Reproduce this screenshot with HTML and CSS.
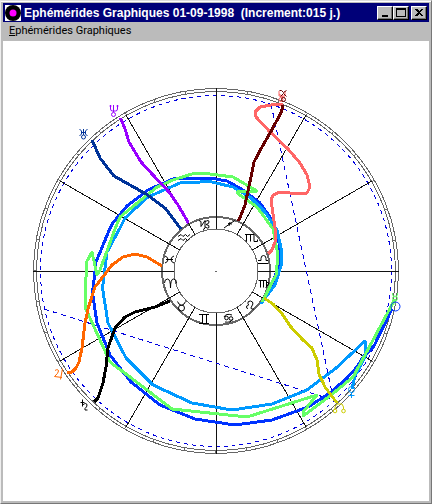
FILE: index.html
```html
<!DOCTYPE html>
<html lang="fr">
<head>
    <meta charset="UTF-8">
    <meta name="viewport" content="width=device-width, initial-scale=1.0">
    <title>Ephémérides Graphiques</title>
    <link rel="stylesheet" href="styles.css">
</head>
<body>
    <div class="window">
        <header class="title-bar">
            <svg class="app-icon" viewBox="0 0 16 16" aria-hidden="true">
                <rect width="16" height="16" fill="#fff"/>
                <circle cx="8" cy="8" r="8" fill="#000"/>
                <circle cx="8" cy="8" r="3.5" fill="#f0f"/>
            </svg>
            <h1 class="title">Ephémérides Graphiques 01-09-1998&nbsp; (Increment:015 j.)</h1>
            <div class="controls">
                <button class="control" aria-label="Minimize">
                    <svg viewBox="0 0 12 10"><path d="M3 7h6v2H3z"/></svg>
                </button>
                <button class="control" aria-label="Maximize">
                    <svg viewBox="0 0 12 10"><path d="M1 0h10v9H1zM2 2v6h8V2z" fill-rule="evenodd"/></svg>
                </button>
                <button class="control close" aria-label="Close">
                    <svg viewBox="0 0 12 10"><path d="M2 1h2l2 2 2-2h2L7 4.500 10 8H8L6 6 4 8H2l3-3.500z"/></svg>
                </button>
            </div>
        </header>
        <nav class="menu-bar">
            <button class="menu-item"><u>E</u>phémérides Graphiques</button>
        </nav>
        <main class="client">
            <svg class="chart" viewBox="3 41 426 460" role="img" aria-label="Ephémérides Graphiques">
                <!-- outer rings, tick marks every 10 degrees -->
                <g class="ring">
                    <circle cx="216" cy="271" r="182.5"/>
                    <circle cx="216" cy="271" r="179.5"/>
                    <circle class="ticks" cx="216" cy="271" r="181" pathLength="360"/>
                    <circle cx="216" cy="271" r="42"/>
                    <circle class="thick" cx="216" cy="271" r="54"/>
                    <path d="M215 271h2"/>
                </g>
                <circle class="dashed" cx="216" cy="271" r="175.5"/>

                <!-- house lines -->
                <g class="spokes">
                    <path d="M258 271H399M174 271H33M216 229V88M216 313V454"/>
                    <path d="M252.4 250L372 181M237 234.6L306 115M195 234.6L126 115M179.6 250L60 181"/>
                    <path d="M179.6 292L60 361M195 307.4L126 427M237 307.4L306 427M252.4 292L372 361"/>
                </g>

                <!-- aspect lines -->
                <path class="dashed aspects" d="M271 104L334 402M44 309L330 399"/>

                <!-- planet tracks -->
                <g class="tracks">
                    <path stroke="#0033ff" d="M392 309L374 346 363 357 357 367 347 378 330 393 308 407 272 420 235 425 195 419 160 405 131 382 110 355 97 323 92.5 293 96 262 108 233 112 224 127 206 148 190 173 179 202 178 210 178 227 181 243 190 260 203 270 217 277 231 280 248 279 265 273 282 262 303"/>
                    <path stroke="#0099ff" d="M352 389L355 376 365 357V341L335 369 307 390 272 404 232 410 192 403 153 385 126 358 108 323 102.5 288 107 252 120 228 125 218 148 197 180 183 210 181.5 233 187 250 197 265 212 277 230 281 248 281 266 275 285 265 298 261 304"/>
                    <path stroke="#66ff66" d="M395 299L365 355 353 377 330 396 303 416V412L317 395 247 417 172 409 130 377 110 362 85 307 86.5 262 92 252 97 275 100 270 115 229 120 217 157 187 173 180 195 173 210 174 233 177 257 191 239 191 237 193 257 207 273 229 278 255 276 275 262 302"/>
                    <path stroke="#cccc00" d="M264 298L273 304 283 315 290 326 303 340 312 348 317 360 319 374 325 387 337 403"/>
                    <path stroke="#ff6600" d="M67 372H72L76 368 79 362 82 348 85 323 88.5 307 95 287 112 265 123 257 135 254 147 257 162 266"/>
                    <path stroke="#000000" d="M94 402L98 398 103 383 106 367 108 348 115 328 125 317 135 312 155 307 170 301"/>
                    <path stroke="#003399" d="M92 140L100 158 114 176 146 194 165 208 181 229"/>
                    <path stroke="#9900ff" d="M120.5 118L125 129 129 142 135 152 141 162 153 175 169 192 178 205 188.5 223"/>
                    <path stroke="#ff6666" d="M283 104L271 105 260 107 255 112 256 117 270 132 288 149 300 163 307 175 310 187 307 193 300 194 280 192 273 195 271 200 275 228 276 235 275 242 272 250 268 254"/>
                    <path stroke="#660000" d="M283 105L281.5 112 270 133 262 147 254 162 251 177 245 205 238.5 221"/>
                </g>

                <!-- planet symbols -->
                <g class="symbols">
                    <g stroke="#9900ff"><path d="M110.500 105v4q0 2 2 2h3q2 0 2-2v-4M113.500 105v7M109.500 106h2M116.500 106h2"/><circle cx="113.500" cy="114.500" r="2"/></g>
                    <g stroke="#003399"><path d="M79.500 129l2 2v3l-2 2M87.500 129l-2 2v3l2 2M81.500 132.500h4M83.500 129v6"/><circle cx="83.500" cy="137" r="2"/></g>
                    <g stroke="#ff6666"><path d="M279 91v5h6v-5M279 94l6 4M282 96v4"/><circle cx="281" cy="99.500" r="2"/></g>
                    <g stroke="#660000"><path d="M279.500 90.500h2l2 2 3-2M280.500 96.500l3-3 3 3"/><circle cx="283.500" cy="99.500" r="2"/></g>
                    <g stroke="#ff6600"><path d="M55 370.500q3-2 3.500.5 0 2-4 5.500l7.500 1M62.500 368.500l-2 11"/></g>
                    <g stroke="#000000"><path d="M80.500 402.500h4M82.500 399.500v7M82.500 405q4-3 4.500 0 0 2-2 3.500v1.500h2.500"/></g>
                    <g stroke="#66ff66"><path d="M392.500 293v2l2 2h1l2-2v-2M395 300.500v4"/><circle cx="395" cy="298.500" r="2.500"/></g>
                    <g stroke="#0033ff"><circle cx="395.500" cy="306.500" r="4.500"/></g>
                    <g stroke="#0099ff"><circle cx="351.500" cy="389.500" r="3"/><path d="M351.500 392v6M348.500 395.500h6"/></g>
                    <g stroke="#cccc00"><circle cx="335" cy="411" r="1.800"/><circle cx="343.500" cy="411" r="1.800"/><path d="M335 409v-2l2-3h5l1.500 3v2"/></g>
                </g>

                <!-- zodiac signs -->
                <g class="signs">
                    <path d="M164.500 283q0-4 3-4 3 0 3 9 0-9 3-9 3 0 3 4"/>
                    <path d="M165 256q3 1 3 3.500t-3 3.500M174 256q-3 1-3 3.500t3 3.500M166 259.500h7"/>
                    <path d="M178 236.500l3-2 2 2 2.500-2 2 2 2.500-2M178 240.500l3-2 2 2 2.500-2 2 2 2.500-2"/>
                    <path d="M199 220.500l2 1v5l4-6v7q-.5 2-2 2M205 222q4-3 4 0 0 2-3 2.500 4 .5 3 3-1 1.500-4-.5"/>
                    <path d="M224 228l7-5 4-2.500M228 223.500l4 .5M229 226l1-4"/>
                    <path d="M245 234.500h9v7h3.500v-2M246.500 234.500v7M250.500 234.500v7"/>
                    <path d="M258 263.500h10M258 260.500h3v-2q0-3 2.500-3t2.500 3v2h2"/>
                    <path d="M258.500 280.500h8v7M260.500 280.500v7M263.500 280.500v7M266.500 282.500h2v2l-3 3"/>
                    <path d="M248 308.500a1.500 1.500 0 1 1-.1-3q1.500 0 0-2-.5-2.500 2.500-2.500 3 .5 2.500 3l-2 4q0 1.500 3 1"/>
                    <path d="M224 317q2-4 8-2M233 319q-2 4-8 3"/><circle cx="226.500" cy="318" r="1.800"/><circle cx="231" cy="318.500" r="1.800"/>
                    <path d="M199 314.500h10M199 323.500h10M202.500 314.500v9M206.500 314.500v9"/>
                    <path d="M177.500 301.500q1 3 4 4 3-1 4-4"/><circle cx="181.500" cy="308" r="3"/>
                </g>
            </svg>
        </main>
    </div>
</body>
</html>
```
FILE: styles.css
```css
* {
    box-sizing: border-box;
}
body {
    margin: 0;
    font-family: "Liberation Sans", Arial, sans-serif;
    background-color: #bbb;
}
.window {
    min-height: 100vh;
    display: flex;
    flex-direction: column;
    padding: 1px 2px 2px 2px;
    border: 1px solid #777;
    border-top-color: #ddd;
    border-left-color: #eee;
    background-color: #bbb;
    box-shadow: inset 0 1px #fff;
}
.title-bar {
    display: flex;
    align-items: center;
    height: 19px;
    margin-top: 1px;
    padding: 0 2px;
    background-color: #000078;
}
.app-icon {
    width: 16px;
    height: 16px;
    flex: none;
}
.title {
    flex: 1;
    margin: 0;
    padding-left: 3px;
    color: #fff;
    font-size: 12px;
    line-height: 18px;
    white-space: nowrap;
}
.controls {
    display: flex;
}
.control {
    width: 16px;
    height: 14px;
    padding: 1px;
    border: 1px solid;
    border-color: #fff #000 #000 #fff;
    background-color: #bbb;
    box-shadow: inset -1px -1px #777;
}
.control svg {
    display: block;
    width: 12px;
    height: 10px;
    shape-rendering: crispEdges;
}
.close {
    margin-left: 2px;
}
.menu-bar {
    height: 19px;
    padding: 0 6px;
}
.menu-item {
    display: block;
    padding: 0;
    border: none;
    background: none;
    color: #000;
    font-family: Roboto, Arial, sans-serif;
    font-size: 11px;
    line-height: 18px;
}
.client {
    flex: 1;
    background-color: #fff;
}
.chart {
    display: block;
    width: 100%;
    fill: none;
}
.ring {
    stroke: #666;
    shape-rendering: crispEdges;
}
.thick {
    stroke-width: 2;
}
.ticks {
    stroke-width: 3;
    stroke-dasharray: 0.3 9.7;
}
.dashed {
    stroke: #0000e0;
    stroke-dasharray: 4 4;
    shape-rendering: crispEdges;
}
.aspects {
    stroke-dasharray: 5 4;
}
.spokes {
    stroke: #111;
    shape-rendering: crispEdges;
}
.tracks {
    stroke-width: 3;
    stroke-linejoin: round;
    shape-rendering: crispEdges;
}
.signs {
    stroke: #000;
}
```
